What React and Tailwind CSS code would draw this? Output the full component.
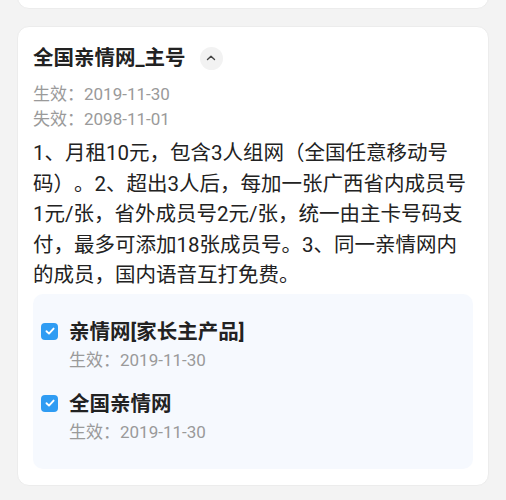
import React from "react";

const font = { fontFamily: 'Roboto, "Noto Sans CJK SC", sans-serif' };

function CheckIcon() {
    return (
        <span className="mt-[6px] flex h-[17px] w-[17px] shrink-0 items-center justify-center rounded-[4px] bg-[#2f9cf3]">
            <svg width="12" height="12" viewBox="0 0 12 12" fill="none">
                <path d="M2.5 6.2 L5 8.6 L9.6 3.6" stroke="white" strokeWidth="1.9" strokeLinecap="round" strokeLinejoin="round" />
            </svg>
        </span>
    );
}

function SubItem({ title, date }) {
    return (
        <div className="flex gap-[11px]">
            <CheckIcon />
            <div>
                <div className="text-[20.5px] font-bold leading-[30px] text-[#222]">{title}</div>
                <div className="text-[17px] leading-[26px] text-[#9a9a9a]">生效：{date}</div>
            </div>
        </div>
    );
}

export default function App() {
    return (
        <div className="h-[500px] w-[506px] overflow-hidden bg-[#f3f3f3] px-[17px] [text-spacing-trim:space-all]" style={font}>
            {/* previous card tail */}
            <div className="mt-[-30px] h-[39px] rounded-b-[12px] border border-[#ececec] bg-white"></div>

            <div className="mt-[17px] h-[460px] rounded-[12px] border border-[#ececec] bg-white px-[15px] pt-[14px]">
                <div className="flex items-center gap-[14px]">
                    <h2 className="text-[20.5px] font-bold leading-[34px] text-[#222]">全国亲情网_主号</h2>
                    <span className="flex h-[23px] w-[23px] items-center justify-center rounded-full bg-[#f2f2f2]">
                        <svg width="12" height="12" viewBox="0 0 12 12" fill="none">
                            <path d="M2.5 7.6 L6 4.2 L9.5 7.6" stroke="#444" strokeWidth="1.4" strokeLinecap="round" strokeLinejoin="round" />
                        </svg>
                    </span>
                </div>
                <div className="mt-[7px] text-[17px] leading-[25px] text-[#9a9a9a]">
                    <div>生效：2019-11-30</div>
                    <div>失效：2098-11-01</div>
                </div>
                <p className="mt-[6px] w-[438px] text-[20.5px] leading-[30.5px] text-[#222]">
                    1、月租10元，包含3人组网（全国任意移动号码）。2、超出3人后，每加一张广西省内成员号1元/张，省外成员号2元/张，统一由主卡号码支付，最多可添加18张成员号。3、同一亲情网内的成员，国内语音互打免费。
                </p>
                <div className="mt-[3px] flex h-[175px] flex-col gap-[16px] rounded-[10px] bg-[#f6f9fe] px-[8px] pt-[23px]">
                    <SubItem title="亲情网[家长主产品]" date="2019-11-30" />
                    <SubItem title="全国亲情网" date="2019-11-30" />
                </div>
            </div>
        </div>
    );
}
